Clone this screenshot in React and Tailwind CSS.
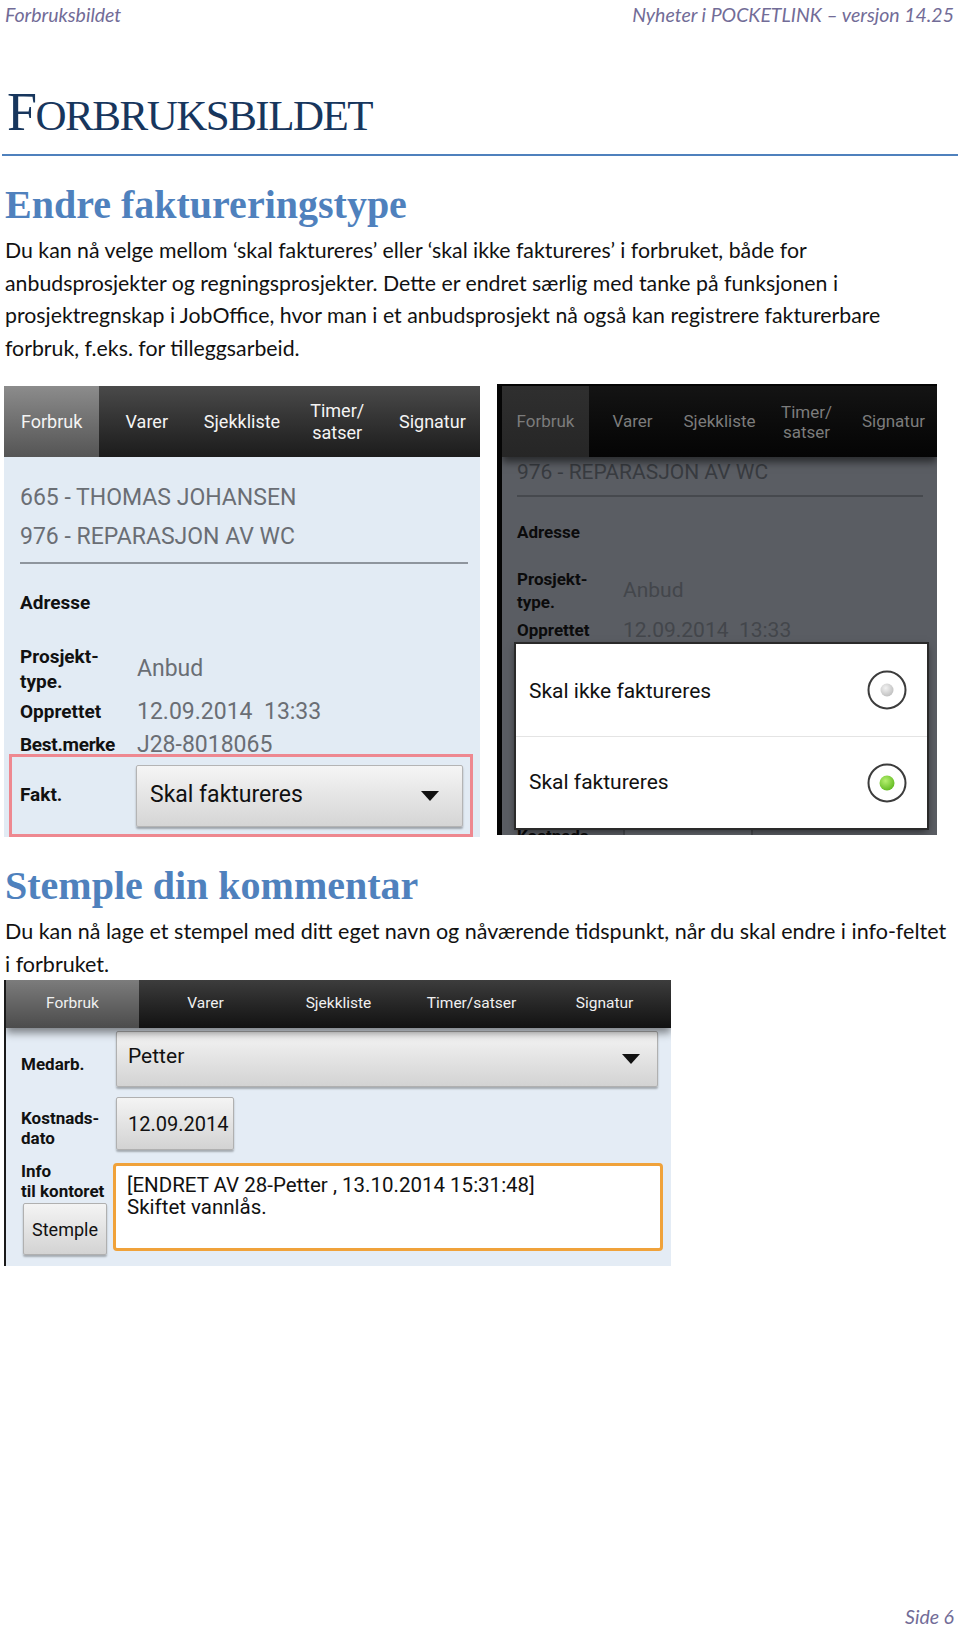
import React from "react";

function Caret({ className = "" }) {
  return (
    <svg className={className} width="18" height="10" viewBox="0 0 18 10">
      <polygon points="0,0 18,0 9,10" fill="#111" />
    </svg>
  );
}

function Radio({ on }) {
  return (
    <svg width="40" height="40" viewBox="0 0 40 40">
      <defs>
        <radialGradient id={on ? "rg-on" : "rg-off"} cx="0.4" cy="0.35" r="0.7">
          <stop offset="0" stopColor={on ? "#b6f070" : "#f2f2f2"} />
          <stop offset="1" stopColor={on ? "#5fb81e" : "#bdbdbd"} />
        </radialGradient>
      </defs>
      <circle cx="20" cy="20" r="18.5" fill="#fff" stroke="#3c3c3c" strokeWidth="2" />
      <circle cx="20" cy="20" r={on ? 7.5 : 6.5} fill={`url(#${on ? "rg-on" : "rg-off"})`} />
    </svg>
  );
}

function FirstShot() {
  return (
    <div className="w-[476px] h-[451px] flex flex-col overflow-hidden bg-[#e2ebf4] font-['Roboto',sans-serif]">
      <div className="h-[71px] shrink-0 grid grid-cols-5 bg-linear-to-b from-[#4a4a4a] to-[#1c1c1c] text-[18px] text-[#f4f4f4]">
        <div className="flex items-center justify-center bg-linear-to-b from-[#8c8c8c] to-[#555555]">Forbruk</div>
        <div className="flex items-center justify-center">Varer</div>
        <div className="flex items-center justify-center">Sjekkliste</div>
        <div className="flex items-center justify-center text-center leading-[22px]">
          Timer/
          <br />
          satser
        </div>
        <div className="flex items-center justify-center">Signatur</div>
      </div>

      <div className="flex flex-col pl-[16px] pr-[12px]">
        <div className="pt-[21px] text-[23px] leading-[39px] text-[#6a6e74]">665 - THOMAS JOHANSEN</div>
        <div className="text-[23px] leading-[39px] text-[#6a6e74]">976 - REPARASJON AV WC</div>
        <div className="mt-[6px] h-[2px] bg-[#8e959d]" />

        <div className="mt-[24px] h-[30px] leading-[30px] text-[19px] font-bold text-[#111]">Adresse</div>

        <div className="mt-[26px] flex items-center">
          <div className="w-[117px] text-[19px] font-bold leading-[25px] text-[#111]">
            Prosjekt-
            <br />
            type.
          </div>
          <div className="text-[23px] text-[#6a6e74]">Anbud</div>
        </div>

        <div className="mt-[3px] h-[30px] flex items-center">
          <div className="w-[117px] text-[19px] font-bold text-[#111]">Opprettet</div>
          <div className="text-[23px] text-[#6a6e74] whitespace-pre">12.09.2014  13:33</div>
        </div>

        <div className="mt-[3px] h-[30px] flex items-center">
          <div className="w-[117px] text-[19px] font-bold text-[#111] tracking-[-0.3px]">Best.merke</div>
          <div className="text-[23px] text-[#6a6e74]">J28-8018065</div>
        </div>

        <div className="-mt-[6px] -ml-[11px] -mr-[5px] h-[83px] border-[3px] border-[#ee8890] flex items-center pl-[8px] pr-[7px]">
          <div className="w-[116px] text-[19px] font-bold text-[#111]">Fakt.</div>
          <div className="flex-1 h-[62px] flex items-center justify-between pl-[13px] pr-[23px] rounded-[2px] border border-[#b4b4b4] bg-linear-to-b from-[#f5f5f5] to-[#d5d5d5] shadow-[0_2px_2px_rgba(0,0,0,0.3)]">
            <span className="text-[23px] text-[#111]">Skal faktureres</span>
            <Caret />
          </div>
        </div>
      </div>
    </div>
  );
}

function SecondShot() {
  return (
    <div className="relative w-[440px] h-[451px] flex flex-col overflow-hidden bg-[#5a5d63] border-l-[5px] border-t-[2px] border-[#050505] font-['Roboto',sans-serif]">
      <div className="relative z-10 h-[71px] shrink-0 grid grid-cols-5 bg-linear-to-b from-[#141414] to-[#050505] text-[17px] text-[#7c7c7c] shadow-[0_5px_8px_rgba(0,0,0,0.55)]">
        <div className="flex items-center justify-center bg-linear-to-b from-[#2f2f2f] to-[#262626]">Forbruk</div>
        <div className="flex items-center justify-center">Varer</div>
        <div className="flex items-center justify-center">Sjekkliste</div>
        <div className="flex items-center justify-center text-center leading-[20px]">
          Timer/
          <br />
          satser
        </div>
        <div className="flex items-center justify-center">Signatur</div>
      </div>

      <div className="flex flex-col pl-[15px] pr-[14px]">
        <div className="h-[30px] leading-[30px] text-[21px] text-[#383b40]">976 - REPARASJON AV WC</div>
        <div className="mt-[8px] h-[2px] bg-[#46494e]" />

        <div className="mt-[22px] h-[26px] leading-[26px] text-[17px] font-bold text-[#0b0b0c]">Adresse</div>

        <div className="mt-[23px] flex items-center">
          <div className="w-[106px] text-[17px] font-bold leading-[23px] text-[#0b0b0c]">
            Prosjekt-
            <br />
            type.
          </div>
          <div className="text-[21px] text-[#43464b]">Anbud</div>
        </div>

        <div className="mt-[4px] h-[26px] flex items-center">
          <div className="w-[106px] text-[17px] font-bold text-[#0b0b0c]">Opprettet</div>
          <div className="text-[21px] text-[#43464b] whitespace-pre">12.09.2014  13:33</div>
        </div>

        <div className="mt-[178px] h-[40px] flex items-start">
          <div className="w-[106px] pt-[3px] text-[17px] font-bold leading-[23px] text-[#0b0b0c]">Kostnads-</div>
          <div className="w-[130px] h-[40px] border-x-2 border-[#474a4f] bg-[#62666c]" />
        </div>
      </div>

      <div className="absolute left-[14px] top-[258px] w-[411px] h-[184px] flex flex-col bg-white shadow-[0_0_0_2px_#2a2a2a,0_3px_8px_rgba(0,0,0,0.6)]">
        <div className="h-[92px] flex items-center justify-between pl-[13px] pr-[20px]">
          <span className="pt-[4px] text-[21px] text-[#111]">Skal ikke faktureres</span>
          <Radio on={false} />
        </div>
        <div className="h-px bg-[#e4e4e4]" />
        <div className="flex-1 flex items-center justify-between pl-[13px] pr-[20px]">
          <span className="text-[21px] text-[#111]">Skal faktureres</span>
          <Radio on />
        </div>
      </div>
    </div>
  );
}

function ThirdShot() {
  const button =
    "border border-[#b0b0b0] rounded-[2px] bg-linear-to-b from-[#f4f4f4] to-[#d3d3d3] shadow-[0_2px_2px_rgba(0,0,0,0.28)]";
  return (
    <div className="w-[667px] h-[286px] flex flex-col overflow-hidden bg-[#e4ecf5] border-l-2 border-[#1a1a1a] font-['Roboto',sans-serif]">
      <div className="relative z-10 h-[48px] shrink-0 grid grid-cols-5 bg-linear-to-b from-[#3d3d3d] to-[#121212] text-[15.5px] text-[#f0f0f0] shadow-[0_5px_8px_rgba(0,0,0,0.45)]">
        <div className="flex items-center justify-center bg-linear-to-b from-[#7c7c7c] to-[#4c4c4c]">Forbruk</div>
        <div className="flex items-center justify-center">Varer</div>
        <div className="flex items-center justify-center">Sjekkliste</div>
        <div className="flex items-center justify-center">Timer/satser</div>
        <div className="flex items-center justify-center">Signatur</div>
      </div>

      <div className="flex flex-col pl-[15px] pr-[13px]">
        <div className="mt-[3px] flex items-start">
          <div className="w-[95px] pt-[22px] text-[17px] font-bold leading-[22px] text-[#111]">Medarb.</div>
          <div className={`flex-1 h-[56px] flex items-center justify-between pl-[11px] pr-[17px] ${button}`}>
            <span className="pb-[4px] text-[21px] text-[#111]">Petter</span>
            <Caret />
          </div>
        </div>

        <div className="mt-[10px] flex items-start">
          <div className="w-[95px] pt-[11px] text-[17px] font-bold leading-[20px] text-[#111]">
            Kostnads-
            <br />
            dato
          </div>
          <div className={`w-[118px] h-[53px] flex items-center pl-[11px] text-[20px] text-[#111] ${button}`}>
            12.09.2014
          </div>
        </div>

        <div className="mt-[13px] flex items-start">
          <div className="w-[92px] flex flex-col">
            <div className="-mt-[2px] text-[17px] font-bold leading-[20px] text-[#111] whitespace-nowrap">
              Info
              <br />
              til kontoret
            </div>
            <div className={`mt-[2px] ml-[2px] w-[84px] h-[52px] flex items-center justify-center text-[18px] text-[#111] ${button}`}>
              Stemple
            </div>
          </div>
          <div className="flex-1 -mr-[5px] h-[88px] border-[3px] border-[#f0a23a] rounded-[4px] bg-white pl-[11px] pt-[8px] text-[20.5px] leading-[22px] text-[#111]">
            [ENDRET AV 28-Petter , 13.10.2014 15:31:48]
            <br />
            Skiftet vannlås.
          </div>
        </div>
      </div>
    </div>
  );
}

export default function App() {
  return (
    <div className="min-h-[1629px] flex flex-col bg-white pl-[5px] pr-[6px] font-['Lato',sans-serif] text-[#111]">
      <header className="h-[30px] flex items-center justify-between text-[19.5px] italic text-[#726c97]">
        <span>Forbruksbildet</span>
        <span>Nyheter i POCKETLINK – versjon 14.25</span>
      </header>

      <h1 className="mt-[52px] pl-[2px] font-['Liberation_Serif',serif] text-[54px] leading-[60px] font-normal tracking-[-1.5px] text-[#17365d]">
        F<span className="text-[43px]">ORBRUKSBILDET</span>
      </h1>
      <div className="mt-[8px] -ml-[3px] -mr-[4px] h-[2px] bg-[#4f81bd]" />

      <h2 className="mt-[26px] font-['Liberation_Serif',serif] text-[40px] leading-[46px] font-bold text-[#4f81bd]">
        Endre faktureringstype
      </h2>
      <p className="mt-[6px] whitespace-nowrap text-[21.3px] leading-[32.5px]">
        Du kan nå velge mellom ‘skal faktureres’ eller ‘skal ikke faktureres’ i forbruket, både for
        <br />
        anbudsprosjekter og regningsprosjekter. Dette er endret særlig med tanke på funksjonen i
        <br />
        prosjektregnskap i JobOffice, hvor man i et anbudsprosjekt nå også kan registrere fakturerbare
        <br />
        forbruk, f.eks. for tilleggsarbeid.
      </p>

      <div className="mt-[22px] -ml-[1px] flex items-start gap-[17px]">
        <FirstShot />
        <div className="-mt-[2px]">
          <SecondShot />
        </div>
      </div>

      <h2 className="mt-[26px] font-['Liberation_Serif',serif] text-[40px] leading-[46px] font-bold text-[#4f81bd]">
        Stemple din kommentar
      </h2>
      <p className="mt-[6px] whitespace-nowrap text-[21.5px] leading-[32.5px]">
        Du kan nå lage et stempel med ditt eget navn og nåværende tidspunkt, når du skal endre i info-feltet
        <br />i forbruket.
      </p>

      <div className="-ml-[1px]">
        <ThirdShot />
      </div>

      <footer className="mt-auto h-[24px] flex items-center justify-end text-[19.5px] italic text-[#726c97]">
        Side 6
      </footer>
    </div>
  );
}
